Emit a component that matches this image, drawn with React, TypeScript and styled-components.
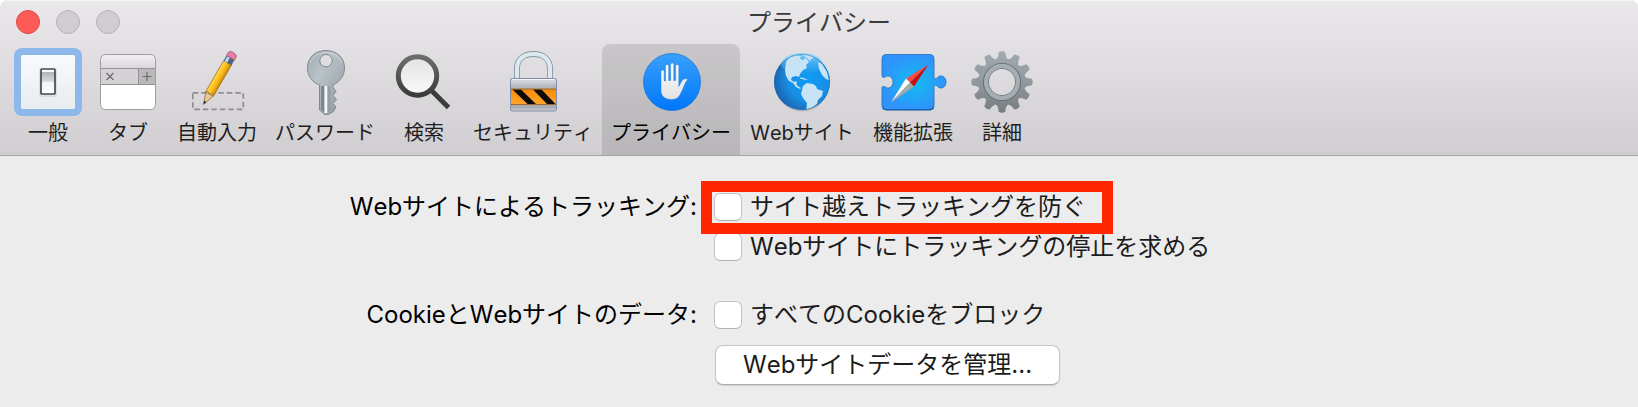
import React from 'react';
import styled, { createGlobalStyle } from 'styled-components';

const GlobalStyle = createGlobalStyle`
  *, *::before, *::after { box-sizing: border-box; }
  body {
    margin: 0;
    background: #fff;
    color: #111;
    font-family: Inter, 'Noto Sans CJK JP', sans-serif;
    font-kerning: none;
  }
`;

const PreferencesWindow = styled.div`
  min-height: 100vh;
  display: flex;
  flex-direction: column;
  border-radius: 8px 8px 0 0;
  overflow: hidden;
  background: #ececec;
`;

const Header = styled.header`
  background: linear-gradient(#eae8ea, #d0ced0);
  border-bottom: 1px solid #a5a4a5;
  box-shadow: inset 0 1px 0 #f5f4f5;
`;

const TitleBar = styled.div`
  display: grid;
  grid-template-columns: 1fr auto 1fr;
  align-items: center;
  height: 44px;
  padding: 0 16px;
`;

const WindowButtons = styled.div`
  display: flex;
  gap: 16px;
`;

const WindowButton = styled.button<{ $active?: boolean }>`
  width: 24px;
  height: 24px;
  padding: 0;
  border-radius: 50%;
  border: 1px solid ${(p) => (p.$active ? '#df4744' : '#b5b3b5')};
  background: ${(p) => (p.$active ? '#fc5b57' : '#cfcdcf')};
`;

const Title = styled.h1`
  margin: 0;
  padding-top: 2px;
  font-size: 24px;
  line-height: 32px;
  font-weight: 400;
  color: #3c3b3c;
`;

const Toolbar = styled.nav`
  display: flex;
  padding: 0 8px;
`;

const ToolbarItem = styled.button<{ $selected?: boolean; $minWidth?: number }>`
  display: flex;
  flex-direction: column;
  align-items: center;
  gap: 3px;
  min-width: ${(p) => p.$minWidth ?? 80}px;
  padding: 4px 9px 8px;
  border: 0;
  border-radius: 8px 8px 0 0;
  background: ${(p) => (p.$selected ? 'rgba(0, 0, 0, 0.115)' : 'transparent')};
  color: ${(p) => (p.$selected ? '#000' : '#1f1e1f')};
  font: inherit;
  font-size: 20px;
  font-kerning: none;
  line-height: 28px;
  white-space: nowrap;
`;

const Icon = styled.svg`
  display: block;
  width: 68px;
  height: 68px;
  margin: 0 -6px;
  overflow: visible;
`;

const Settings = styled.main`
  display: grid;
  grid-template-columns: 43fr 57fr;
  column-gap: 17px;
  row-gap: 28px;
  padding: 31px 0 21px;
  font-size: 24px;
  line-height: 40px;
`;

const GroupLabel = styled.div`
  text-align: right;
  white-space: nowrap;
  color: #000;
`;

const Options = styled.div`
  display: flex;
  flex-direction: column;
  align-items: flex-start;
`;

const Option = styled.label<{ $highlighted?: boolean }>`
  position: relative;
  display: flex;
  align-items: center;
  gap: 8px;
  height: 40px;
  white-space: nowrap;
  color: #1c1c1c;

  ${(p) =>
    p.$highlighted &&
    `&::after {
      content: '';
      position: absolute;
      z-index: 1;
      inset: -6px -27px -7px -13px;
      border: 11px solid #ff2600;
      pointer-events: none;
    }`}
`;

const Checkbox = styled.input`
  appearance: none;
  width: 28px;
  height: 28px;
  margin: 0;
  border: 1px solid #c3c3c3;
  border-bottom-color: #b4b4b4;
  border-radius: 6px;
  background: #fff;
`;

const ManageButton = styled.button`
  height: 40px;
  margin: 10px 0 0 1px;
  padding: 0 27px;
  border: 1px solid #c6c6c6;
  border-bottom-color: #acacac;
  border-radius: 8px;
  background: #fff;
  box-shadow: 0 1px 1px rgba(0, 0, 0, 0.12);
  color: #1c1c1c;
  font: inherit;
  font-kerning: none;
  line-height: 36px;
  white-space: nowrap;
`;

const GeneralIcon = () => (
  <Icon viewBox="0 0 68 68" aria-hidden="true">
    <defs>
      <linearGradient id="plate" x2="0" y2="1"><stop stopColor="#f9fafb" /><stop offset="1" stopColor="#e8ecef" /></linearGradient>
      <linearGradient id="rocker" x2="0" y2="1"><stop stopColor="#f8f8f8" /><stop offset=".12" stopColor="#f8f8f8" /><stop offset=".14" stopColor="#b4b7ba" /><stop offset=".5" stopColor="#d8dadc" /><stop offset=".54" stopColor="#f4f5f6" /><stop offset="1" stopColor="#fff" /></linearGradient>
    </defs>
    <rect width="68" height="68" rx="8" fill="#8fb8ea" />
    <rect x="7" y="7" width="54" height="54" rx="1.5" fill="url(#plate)" />
    <rect x="25" y="20" width="18" height="29" rx="2" fill="#c9ccd0" opacity=".5" />
    <rect x="27" y="21" width="14" height="25" rx="1" fill="url(#rocker)" stroke="#47494b" strokeWidth="1.7" />
  </Icon>
);

const TabIcon = () => (
  <Icon viewBox="0 0 68 68" aria-hidden="true">
    <defs>
      <linearGradient id="tabTop" x2="0" y2="1"><stop stopColor="#f2f0f2" /><stop offset="1" stopColor="#d9d7d9" /></linearGradient>
      <clipPath id="tabClip"><rect x="6.5" y="6.5" width="55" height="55" rx="5" /></clipPath>
    </defs>
    <g clipPath="url(#tabClip)">
      <rect x="6" y="6" width="56" height="56" fill="#fff" />
      <rect x="6" y="6" width="56" height="14.5" fill="url(#tabTop)" />
      <rect x="6" y="20.5" width="56" height="16" fill="#d4d2d4" />
      <rect x="44" y="20.5" width="18" height="16" fill="#bab8ba" />
      <path d="M6 20.5h56M6 36.5h56M44.5 20.5v16" stroke="#949294" />
    </g>
    <rect x="6.5" y="6.5" width="55" height="55" rx="5" fill="none" stroke="#9d9b9d" />
    <path d="M12.5 25l7 7m0-7l-7 7M48.5 28.5h9m-4.500-4.500v9" stroke="#6c6a6c" strokeWidth="1.2" />
  </Icon>
);

const AutoFillIcon = () => (
  <Icon viewBox="0 0 68 68" aria-hidden="true">
    <defs>
      <linearGradient id="wood"><stop stopColor="#ffd84c" /><stop offset=".5" stopColor="#fdbf1e" /><stop offset="1" stopColor="#c98707" /></linearGradient>
    </defs>
    <rect x="9.800" y="44.800" width="50.500" height="16.500" fill="none" stroke="#8f8d8f" strokeWidth="1.700" strokeDasharray="5.500 3" />
    <g transform="translate(20.500 56.500) rotate(30)">
      <path d="M0 0l-4.200-12h8.400z" fill="#edc596" stroke="#8f6a42" strokeWidth=".7" />
      <path d="M0 0l-1.300-3.500h2.600z" fill="#2b2725" />
      <path d="M-4.500-12l2-1.500 2.500 1.500 2.500-1.500 2 1.500V-48h-9z" fill="url(#wood)" stroke="#9a7016" strokeWidth=".7" />
      <rect x="-4.600" y="-54" width="9.200" height="6" fill="#51647f" />
      <path d="M-3.500-54h3v6h-3z" fill="#bcd3ec" />
      <path d="M-4.600-54v-3q0-3 4.600-3t4.600 3v3z" fill="#e67da3" stroke="#a94f73" strokeWidth=".7" />
    </g>
  </Icon>
);

const KeyIcon = () => (
  <Icon viewBox="0 0 68 68" aria-hidden="true">
    <defs>
      <linearGradient id="steel" x2="1" y2="1"><stop stopColor="#9faab0" /><stop offset=".35" stopColor="#bac3c7" /><stop offset="1" stopColor="#8d979b" /></linearGradient>
    </defs>
    <path fillRule="evenodd" d="M35 2.500C45 2.500 53.500 9 53.500 20C53.500 28 48.500 34 42 37v2.500l3 4-3 4 3.500 4-3.500 4 3 3.500-2.500 4.500-5.500 3h-3.500L28.500 62V37C21 34 16.500 28 16.500 20C16.500 9 25 2.500 35 2.500zM35 6.500a6.200 6.200 0 1 0 0 12.400a6.200 6.200 0 1 0 0-12.400z" fill="url(#steel)" stroke="#7f898e" />
    <path d="M30 38v23.500l3.500 3.500V38z" fill="#7f878c" />
    <path d="M33.500 38v27h3V38z" fill="#f4f6f7" />
    <path d="M36.500 38v27l3-2V38z" fill="#959ea3" />
    <path d="M19 15C22 7 29 4.500 35 4.500S48 7 51 15" fill="none" stroke="#d7dee1" opacity=".7" />
  </Icon>
);

const SearchIcon = () => (
  <Icon viewBox="0 0 68 68" aria-hidden="true">
    <defs>
      <linearGradient id="lens" x2="0" y2="1"><stop stopColor="#e3e1e3" /><stop offset="1" stopColor="#fbfafb" /></linearGradient>
      <linearGradient id="rim" x2="0" y2="1"><stop stopColor="#6d6d6d" /><stop offset="1" stopColor="#3b3b3b" /></linearGradient>
    </defs>
    <path d="M41.500 42.500L58.500 59.500" stroke="#3c3c3c" strokeWidth="5" />
    <circle cx="27.500" cy="28" r="19.200" fill="url(#lens)" stroke="url(#rim)" strokeWidth="5" />
  </Icon>
);

const LockIcon = () => (
  <Icon viewBox="0 0 68 68" aria-hidden="true">
    <defs>
      <linearGradient id="lockBody" x2="0" y2="1"><stop stopColor="#dfe2e6" /><stop offset=".25" stopColor="#b4b8be" /><stop offset=".9" stopColor="#a9adb3" /><stop offset="1" stopColor="#d2d5d9" /></linearGradient>
      <linearGradient id="tape" x2="0" y2="1"><stop stopColor="#f78a0c" /><stop offset="1" stopColor="#ffa62b" /></linearGradient>
    </defs>
    <path d="M18 32V20.500C18 11 25 6 34.500 6S51 11 51 20.500V32" fill="none" stroke="#8798a5" strokeWidth="6" />
    <path d="M18 32V20.500C18 11 25 6 34.500 6S51 11 51 20.500V32" fill="none" stroke="#dce9ef" strokeWidth="4.200" />
    <rect x="11.500" y="30.500" width="46" height="32.500" rx="2" fill="url(#lockBody)" stroke="#7f8caa" />
    <path d="M13 31.500h43" stroke="#f3f5f7" />
    <rect x="12" y="41" width="45" height="15.500" fill="url(#tape)" />
    <path d="M13.500 41.500h8.500L37 56h-8.500zM34 41.500h8.500L56.500 56H48z" fill="#0d0b08" />
    <path d="M12 41h45M12 56.500h45" stroke="#8c5820" strokeWidth=".8" />
  </Icon>
);

const PrivacyIcon = () => (
  <Icon viewBox="0 0 68 68" aria-hidden="true">
    <defs>
      <linearGradient id="disc" x2="0" y2="1"><stop stopColor="#39a0fb" /><stop offset="1" stopColor="#0077fb" /></linearGradient>
      <linearGradient id="palm" x2="0" y2="1"><stop stopColor="#fff" /><stop offset="1" stopColor="#dfe1e3" /></linearGradient>
    </defs>
    <circle cx="35" cy="34" r="28.500" fill="url(#disc)" stroke="#1779dc" strokeWidth=".8" />
    <path d="M24 23.500a1.600 1.600 0 0 1 3.200 0V33h1.300V18a1.600 1.600 0 0 1 3.200 0V32.500H33.600V16.500a1.600 1.600 0 0 1 3.200 0V32.500H38.600V18a1.600 1.600 0 0 1 3.200 0V38.500L44.500 33.500C46 31 48 30.500 50.500 31C50.800 32 49.500 32.500 48.500 34.500C46.500 39 45 43.500 42.500 47.500C40.500 50.500 38 51.500 34.500 51.500C27.500 51.500 24 48 24 42z" fill="url(#palm)" stroke="#1b6ec7" strokeWidth=".4" />
  </Icon>
);

const GlobeIcon = () => (
  <Icon viewBox="0 0 68 68" aria-hidden="true">
    <defs>
      <radialGradient id="ocean" cx=".62" cy=".45" r=".65"><stop stopColor="#0f9cf4" /><stop offset=".6" stopColor="#188de2" /><stop offset="1" stopColor="#1b5fa9" /></radialGradient>
      <linearGradient id="gloss" x2="0" y2="1"><stop stopColor="#8adcff" stopOpacity=".9" /><stop offset="1" stopColor="#58bdf5" stopOpacity="0" /></linearGradient>
      <clipPath id="globeClip"><circle cx="34" cy="34" r="28" /></clipPath>
    </defs>
    <ellipse cx="34" cy="36" rx="27" ry="27.500" fill="#000" opacity=".15" />
    <circle cx="34" cy="34" r="28" fill="url(#ocean)" />
    <ellipse cx="34" cy="16" rx="21" ry="11" fill="url(#gloss)" />
    <g clipPath="url(#globeClip)" fill="#c7e3f6">
      <path d="M18 14l3-4 6-3 6 1-1 3 3 1 3-2 3 4-3 3 1 3-4 2-3 4-1 3-3-1-4 1-1 3 3 2 2-1 1 2-1 1 3 3 2 1-1 1-4-2-3-4-4-2-3-5-1-6z" />
      <path d="M33 6l7-1 7 5-3 0-2 3-3-3z" />
      <path d="M32 29.500l4 .5 4 2-4-.5-4-1z" />
      <path d="M35 38l4-3 6 1 3 2 1 3 6 2-1 5-4 4-1 4-4 3-3 3-1 4-3-1 1-10-4-5-2-4z" />
      <path d="M50 14l4 2 5 8 2 8-3-1-4-4-3-6z" />
    </g>
    <circle cx="34" cy="34" r="27.600" fill="none" stroke="#1f6cb5" strokeWidth=".8" opacity=".7" />
  </Icon>
);

const ExtensionIcon = () => (
  <Icon viewBox="0 0 68 68" aria-hidden="true">
    <defs>
      <radialGradient id="piece"><stop stopColor="#12bdf0" /><stop offset="1" stopColor="#2f93fb" /></radialGradient>
    </defs>
    <path d="M7 6.500H51a4 4 0 0 1 4 4V28.500C55 31 57 31.500 58.500 29.500C61 26.500 67 28 67 34S61 41.500 58.500 38.500C57 36.500 55 37 55 39.500V58a4 4 0 0 1-4 4H7a4 4 0 0 1-4-4V39.500C4 37.500 5.500 38.500 7.500 39.700C11 41 14 38 14 34S11 27 7.500 28.300C5.500 29.500 4 30 3 28.500V10.500a4 4 0 0 1 4-4z" fill="url(#piece)" stroke="#2875c4" strokeWidth=".9" />
    <path d="M4 59.500Q5 61.700 7.500 61.700H50.500Q53.500 61.700 54.500 59" fill="none" stroke="#1d62a8" strokeWidth="1.200" />
    <path d="M49.500 16.500L27 30.500l4 4z" fill="#ff4a42" />
    <path d="M49.500 16.500L31 34.500l4 4z" fill="#c80f12" />
    <path d="M12 54.500L27 30.500l4 4z" fill="#fff" />
    <path d="M12 54.500L31 34.500l4 4z" fill="#aaa9a8" />
  </Icon>
);

const TOOTH_ANGLES = Array.from({ length: 12 }, (_, i) => i * 30);

const GearIcon = () => (
  <Icon viewBox="0 0 68 68" aria-hidden="true">
    <defs>
      <linearGradient id="gear" gradientUnits="userSpaceOnUse" x1="0" y1="-31" x2="0" y2="31"><stop stopColor="#a0aaaf" /><stop offset=".45" stopColor="#929ca0" /><stop offset="1" stopColor="#777b7e" /></linearGradient>
      <mask id="gearMask">
        <g transform="translate(34 34)">
          <circle r="23.500" fill="#fff" />
          {TOOTH_ANGLES.map((angle) => (
            <path key={angle} transform={`rotate(${angle})`} d="M-6.500-22Q-3.700-24-3.200-30Q0-31.500 3.200-30Q3.700-24 6.500-22z" fill="#fff" />
          ))}
          <circle r="13" fill="#000" />
        </g>
      </mask>
    </defs>
    <g mask="url(#gearMask)">
      <g transform="translate(34 34)">
        <circle r="33" fill="url(#gear)" />
        <circle r="18.500" fill="none" stroke="#687277" strokeWidth="1.200" />
        <circle r="15.500" fill="none" stroke="#a5afb3" strokeWidth="5" />
        <circle r="13.500" fill="none" stroke="#737c80" />
      </g>
    </g>
  </Icon>
);

const SECTIONS = [
  { label: '一般', Glyph: GeneralIcon },
  { label: 'タブ', Glyph: TabIcon },
  { label: '自動入力', Glyph: AutoFillIcon },
  { label: 'パスワード', Glyph: KeyIcon },
  { label: '検索', Glyph: SearchIcon },
  { label: 'セキュリティ', Glyph: LockIcon },
  { label: 'プライバシー', Glyph: PrivacyIcon, selected: true },
  { label: 'Webサイト', Glyph: GlobeIcon, minWidth: 124 },
  { label: '機能拡張', Glyph: ExtensionIcon },
  { label: '詳細', Glyph: GearIcon },
];

export default function App() {
  return (
    <>
      <GlobalStyle />
      <PreferencesWindow lang="ja">
        <Header>
          <TitleBar>
            <WindowButtons>
              <WindowButton $active aria-label="閉じる" />
              <WindowButton disabled aria-label="しまう" />
              <WindowButton disabled aria-label="拡大" />
            </WindowButtons>
            <Title>プライバシー</Title>
          </TitleBar>
          <Toolbar>
            {SECTIONS.map(({ label, Glyph, selected, minWidth }) => (
              <ToolbarItem
                key={label}
                $selected={selected}
                $minWidth={minWidth}
                aria-current={selected ? 'page' : undefined}
              >
                <Glyph />
                {label}
              </ToolbarItem>
            ))}
          </Toolbar>
        </Header>
        <Settings>
          <GroupLabel id="tracking">Webサイトによるトラッキング:</GroupLabel>
          <Options role="group" aria-labelledby="tracking">
            <Option $highlighted>
              <Checkbox type="checkbox" />
              サイト越えトラッキングを防ぐ
            </Option>
            <Option>
              <Checkbox type="checkbox" />
              Webサイトにトラッキングの停止を求める
            </Option>
          </Options>
          <GroupLabel id="cookies">CookieとWebサイトのデータ:</GroupLabel>
          <Options role="group" aria-labelledby="cookies">
            <Option>
              <Checkbox type="checkbox" />
              すべてのCookieをブロック
            </Option>
            <ManageButton>Webサイトデータを管理...</ManageButton>
          </Options>
        </Settings>
      </PreferencesWindow>
    </>
  );
}
